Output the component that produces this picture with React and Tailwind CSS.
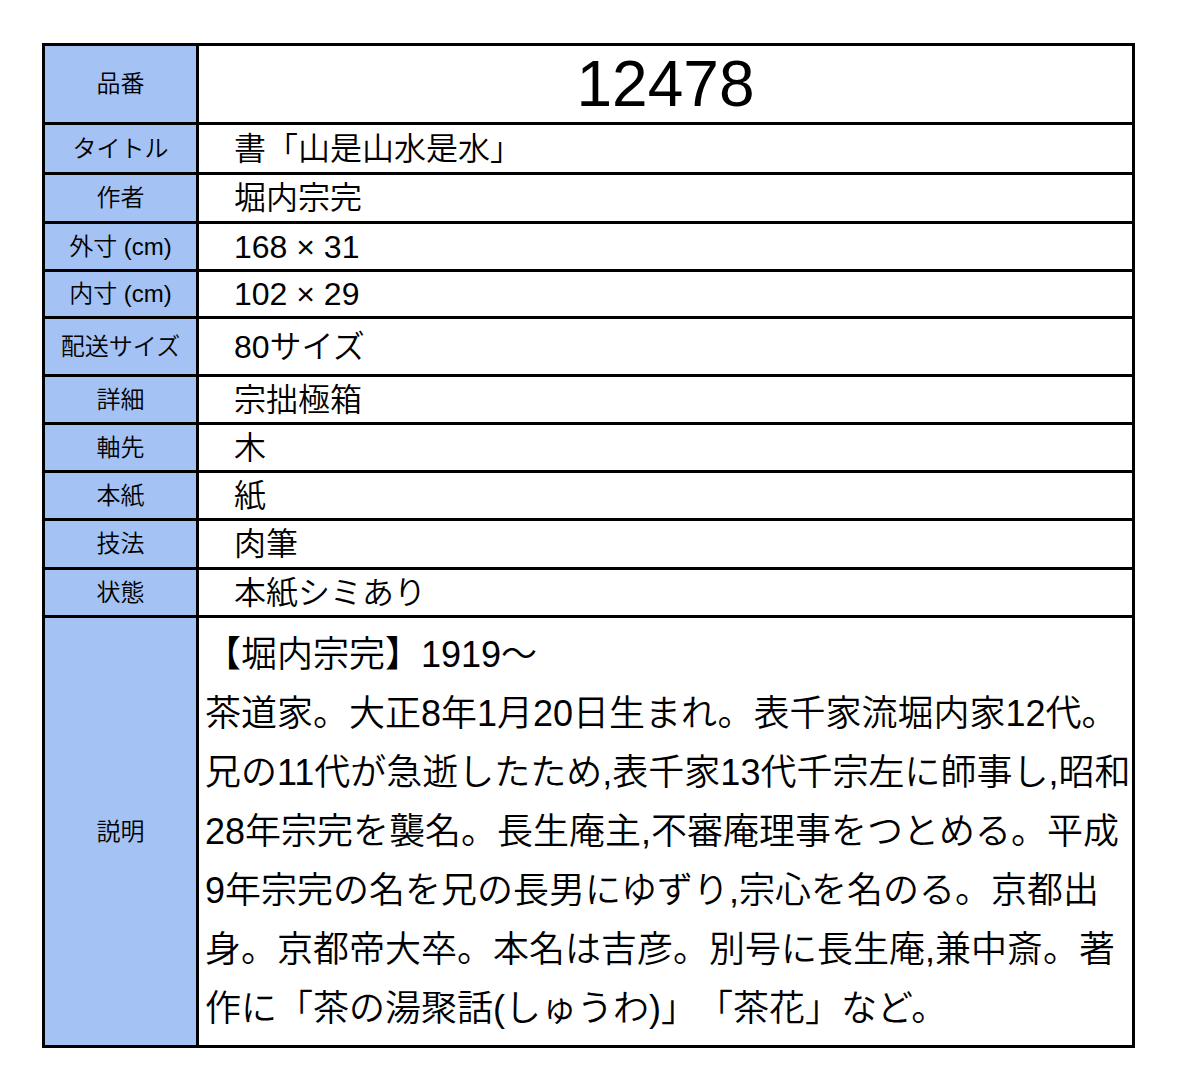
import React from "react";

const rows = [
  { label: "品番", value: "12478", h: "h-[79px]", big: true },
  { label: "タイトル", value: "書「山是山水是水」", h: "h-[50px]" },
  { label: "作者", value: "堀内宗完", h: "h-[49px]" },
  { label: "外寸 (cm)", value: "168 × 31", h: "h-[48px]" },
  { label: "内寸 (cm)", value: "102 × 29", h: "h-[47px]" },
  { label: "配送サイズ", value: "80サイズ", h: "h-[58px]" },
  { label: "詳細", value: "宗拙極箱", h: "h-[48px]" },
  { label: "軸先", value: "木", h: "h-[48px]" },
  { label: "本紙", value: "紙", h: "h-[48px]" },
  { label: "技法", value: "肉筆", h: "h-[49px]" },
  { label: "状態", value: "本紙シミあり", h: "h-[48px]" },
];

const desc = [
  "【堀内宗完】1919～",
  "茶道家。大正8年1月20日生まれ。表千家流堀内家12代。",
  "兄の11代が急逝したため,表千家13代千宗左に師事し,昭和",
  "28年宗完を襲名。長生庵主,不審庵理事をつとめる。平成",
  "9年宗完の名を兄の長男にゆずり,宗心を名のる。京都出",
  "身。京都帝大卒。本名は吉彦。別号に長生庵,兼中斎。著",
  "作に「茶の湯聚話(しゅうわ)」「茶花」など。",
];

export default function App() {
  return (
    <div className="min-h-[1085px] w-[1196px] bg-white pt-[43px] pl-[42px] font-['Liberation_Sans','Noto_Sans_CJK_JP',sans-serif] font-[350] text-black [text-spacing-trim:space-all]">
      <div className="w-[1093px] border-[3px] border-black">
        {rows.map((r) => (
          <div key={r.label} className={`flex border-b-[3px] border-black ${r.h}`}>
            <div className="flex w-[154px] shrink-0 items-center justify-center border-r-[3px] border-black bg-[#a4c2f4] text-[24px] leading-none">
              {r.label}
            </div>
            {r.big ? (
              <div className="flex flex-1 items-center justify-center text-[64px] leading-none">
                {r.value}
              </div>
            ) : (
              <div className="flex flex-1 items-center pl-[35px] text-[32px] leading-none whitespace-nowrap">
                {r.value}
              </div>
            )}
          </div>
        ))}
        <div className="flex h-[427px]">
          <div className="flex w-[154px] shrink-0 items-center justify-center border-r-[3px] border-black bg-[#a4c2f4] text-[24px] leading-none">
            説明
          </div>
          <div className="flex flex-1 flex-col justify-center pl-[6px] text-[36px] leading-[59px]">
            {desc.map((l, i) => (
              <div key={i} className="whitespace-nowrap">
                {l}
              </div>
            ))}
          </div>
        </div>
      </div>
    </div>
  );
}
